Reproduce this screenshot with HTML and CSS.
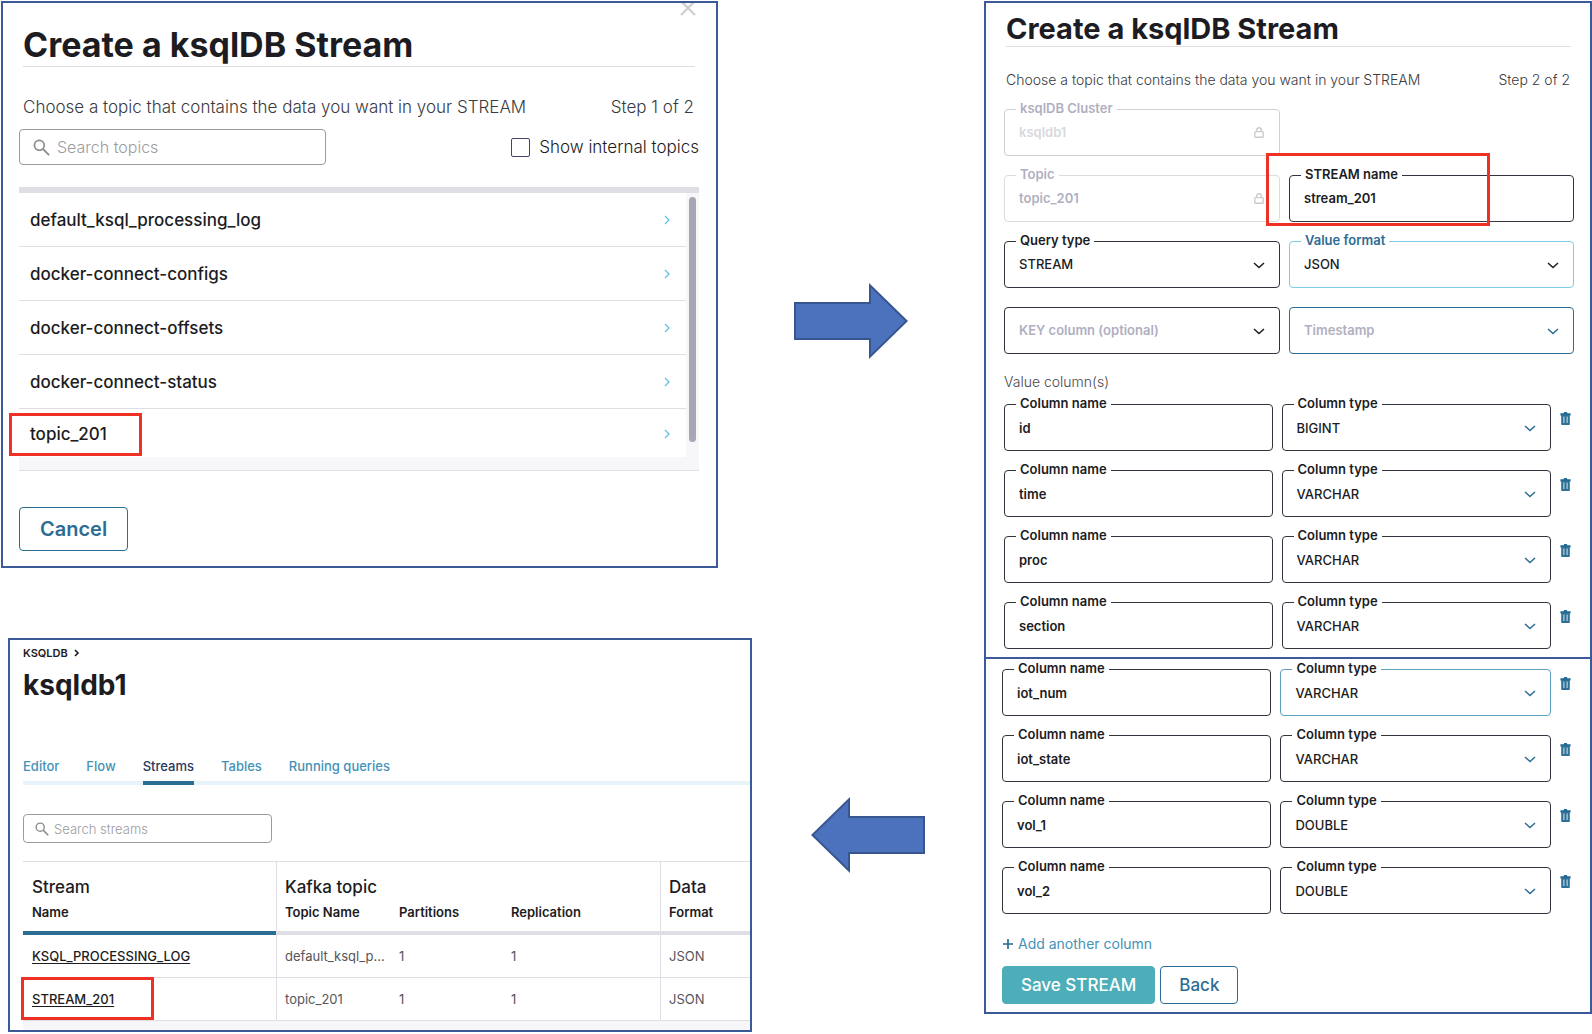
FILE: index.html
```html
<!DOCTYPE html>
<html lang="en">
	<head>
		<meta charset="UTF-8" />
		<meta name="viewport" content="width=device-width, initial-scale=1.0" />
		<title>Create a ksqlDB Stream</title>
		<link rel="stylesheet" href="styles.css">
	</head>
	<body>
		<!-- shared icons -->
		<svg class="sprite" xmlns="http://www.w3.org/2000/svg">
			<symbol id="icon-search" viewBox="0 0 18 18">
				<circle cx="6.7" cy="6.7" r="5.2" fill="none" stroke="currentColor" stroke-width="1.8" />
				<path d="M10.5 10.5L17 17" fill="none" stroke="currentColor" stroke-width="2" />
			</symbol>
			<symbol id="icon-right" viewBox="0 0 6 10">
				<path d="M1 1l4 4-4 4" fill="none" stroke="currentColor" stroke-width="1.2" />
			</symbol>
			<symbol id="icon-down" viewBox="0 0 12 7">
				<path d="M1 1l5 4.6L11 1" fill="none" stroke="currentColor" stroke-width="1.5" />
			</symbol>
			<symbol id="icon-lock" viewBox="0 0 10 11">
				<rect x="0.8" y="4.6" width="8.4" height="5.6" rx="0.8" fill="none" stroke="currentColor" stroke-width="1.4" />
				<path d="M2.6 4.6V3.2a2.4 2.4 0 0 1 4.8 0v1.4" fill="none" stroke="currentColor" stroke-width="1.4" />
			</symbol>
			<symbol id="icon-trash" viewBox="0 0 11 13">
				<path d="M0.4 1.2h3.2L4.2 0h2.6l0.6 1.2h3.2v2.2H0.4z" fill="#236b93" />
				<path d="M1.2 3h8.6v9.2a0.8 0.8 0 0 1-0.8 0.8H2a0.8 0.8 0 0 1-0.8-0.8z" fill="#2f7096" />
				<path d="M3.2 4.600h1.300v6.400H3.200zM6.500 4.600H7.800v6.400H6.500z" fill="#a9cbdc" />
			</symbol>
		</svg>

		<main class="page">
			<div class="left">
				<div class="step">
					<section class="panel pick-topic">
						<button class="close" type="button" aria-label="Close">
							<svg viewBox="0 0 16 16"><path d="M1 1l14 14M15 1L1 15" fill="none" stroke="currentColor" stroke-width="2.4" /></svg>
						</button>
						<h1 class="title">Create a ksqlDB Stream</h1>
						<div class="intro">
							<span>Choose a topic that contains the data you want in your STREAM</span>
							<span>Step 1 of 2</span>
						</div>
						<div class="filter">
							<label class="search">
								<svg><use href="#icon-search" /></svg>
								<input type="text" placeholder="Search topics" aria-label="Search topics" />
							</label>
							<label class="internal">
								<input type="checkbox" />
								<span>Show internal topics</span>
							</label>
						</div>
						<div class="topics">
							<ul class="topic-list">
								<li><a href="#">default_ksql_processing_log <svg><use href="#icon-right" /></svg></a></li>
								<li><a href="#">docker-connect-configs <svg><use href="#icon-right" /></svg></a></li>
								<li><a href="#">docker-connect-offsets <svg><use href="#icon-right" /></svg></a></li>
								<li><a href="#">docker-connect-status <svg><use href="#icon-right" /></svg></a></li>
								<li class="marked"><a href="#">topic_201 <svg><use href="#icon-right" /></svg></a></li>
							</ul>
							<div class="scrollbar"><div class="thumb"></div></div>
						</div>
						<button class="btn btn-large" type="button">Cancel</button>
					</section>
					<div class="arrow arrow-next">
						<svg viewBox="0 0 114 76"><path d="M1 20h75V2.400L112.600 38 76 73.600V56H1z" /></svg>
					</div>
				</div>

				<div class="step step-result">
					<section class="panel streams">
						<a class="crumb" href="#">KSQLDB <svg viewBox="0 0 6 8"><path d="M1 1l3 3-3 3" fill="none" stroke="currentColor" stroke-width="1.6" /></svg></a>
						<h2 class="cluster-name">ksqldb1</h2>
						<nav class="tabs">
							<a href="#">Editor</a>
							<a href="#">Flow</a>
							<a href="#" class="active">Streams</a>
							<a href="#">Tables</a>
							<a href="#">Running queries</a>
						</nav>
						<label class="search search-small">
							<svg><use href="#icon-search" /></svg>
							<input type="text" placeholder="Search streams" aria-label="Search streams" />
						</label>
						<table class="stream-table">
							<colgroup>
								<col class="col-name" />
								<col class="col-topic" />
								<col class="col-partitions" />
								<col class="col-replication" />
								<col />
							</colgroup>
							<thead>
								<tr class="groups">
									<th>Stream</th>
									<th colspan="3" class="group-start">Kafka topic</th>
									<th class="group-start">Data</th>
								</tr>
								<tr class="heads">
									<th class="sorted">Name</th>
									<th class="group-start">Topic Name</th>
									<th>Partitions</th>
									<th>Replication</th>
									<th class="group-start">Format</th>
								</tr>
							</thead>
							<tbody>
								<tr>
									<td><a href="#">KSQL_PROCESSING_LOG</a></td>
									<td class="group-start">default_ksql_p...</td>
									<td>1</td>
									<td>1</td>
									<td class="group-start">JSON</td>
								</tr>
								<tr>
									<td class="marked"><a href="#">STREAM_201</a></td>
									<td class="group-start">topic_201</td>
									<td>1</td>
									<td>1</td>
									<td class="group-start">JSON</td>
								</tr>
							</tbody>
						</table>
						<div class="table-end"></div>
					</section>
					<div class="arrow">
						<svg viewBox="0 0 114 76"><path d="M113 20H38V2.400L1.400 38 38 73.600V56h75z" /></svg>
					</div>
				</div>
			</div>

			<form class="right">
				<section class="panel stream-form">
					<h2 class="title">Create a ksqlDB Stream</h2>
					<div class="intro">
						<span>Choose a topic that contains the data you want in your STREAM</span>
						<span>Step 2 of 2</span>
					</div>
					<div class="settings">
						<div class="field locked faint">
							<label for="cluster">ksqlDB Cluster</label>
							<input id="cluster" type="text" value="ksqldb1" disabled />
							<svg><use href="#icon-lock" /></svg>
						</div>
						<div class="field locked first-col">
							<label for="topic">Topic</label>
							<input id="topic" type="text" value="topic_201" disabled />
							<svg><use href="#icon-lock" /></svg>
						</div>
						<div class="field marked">
							<label for="stream-name">STREAM name</label>
							<input id="stream-name" type="text" value="stream_201" />
						</div>
						<div class="field">
							<label for="query-type">Query type</label>
							<select id="query-type"><option>STREAM</option></select>
							<svg><use href="#icon-down" /></svg>
						</div>
						<div class="field focused">
							<label for="value-format">Value format</label>
							<select id="value-format"><option>JSON</option></select>
							<svg><use href="#icon-down" /></svg>
						</div>
						<div class="field empty">
							<select aria-label="KEY column"><option>KEY column (optional)</option></select>
							<svg><use href="#icon-down" /></svg>
						</div>
						<div class="field empty blue">
							<select aria-label="Timestamp"><option>Timestamp</option></select>
							<svg><use href="#icon-down" /></svg>
						</div>
					</div>
					<p class="columns-title">Value column(s)</p>
					<div class="columns">
						<div class="column">
							<div class="field">
								<label for="name-1">Column name</label>
								<input id="name-1" type="text" value="id" />
							</div>
							<div class="field">
								<label for="type-1">Column type</label>
								<select id="type-1"><option>BIGINT</option></select>
								<svg><use href="#icon-down" /></svg>
							</div>
							<button class="trash" type="button" aria-label="Delete column"><svg><use href="#icon-trash" /></svg></button>
						</div>
						<div class="column">
							<div class="field">
								<label for="name-2">Column name</label>
								<input id="name-2" type="text" value="time" />
							</div>
							<div class="field">
								<label for="type-2">Column type</label>
								<select id="type-2"><option>VARCHAR</option></select>
								<svg><use href="#icon-down" /></svg>
							</div>
							<button class="trash" type="button" aria-label="Delete column"><svg><use href="#icon-trash" /></svg></button>
						</div>
						<div class="column">
							<div class="field">
								<label for="name-3">Column name</label>
								<input id="name-3" type="text" value="proc" />
							</div>
							<div class="field">
								<label for="type-3">Column type</label>
								<select id="type-3"><option>VARCHAR</option></select>
								<svg><use href="#icon-down" /></svg>
							</div>
							<button class="trash" type="button" aria-label="Delete column"><svg><use href="#icon-trash" /></svg></button>
						</div>
						<div class="column">
							<div class="field">
								<label for="name-4">Column name</label>
								<input id="name-4" type="text" value="section" />
							</div>
							<div class="field">
								<label for="type-4">Column type</label>
								<select id="type-4"><option>VARCHAR</option></select>
								<svg><use href="#icon-down" /></svg>
							</div>
							<button class="trash" type="button" aria-label="Delete column"><svg><use href="#icon-trash" /></svg></button>
						</div>
					</div>
				</section>

				<section class="panel stream-form-end">
					<div class="columns">
						<div class="column">
							<div class="field">
								<label for="name-5">Column name</label>
								<input id="name-5" type="text" value="iot_num" />
							</div>
							<div class="field hovered">
								<label for="type-5">Column type</label>
								<select id="type-5"><option>VARCHAR</option></select>
								<svg><use href="#icon-down" /></svg>
							</div>
							<button class="trash" type="button" aria-label="Delete column"><svg><use href="#icon-trash" /></svg></button>
						</div>
						<div class="column">
							<div class="field">
								<label for="name-6">Column name</label>
								<input id="name-6" type="text" value="iot_state" />
							</div>
							<div class="field">
								<label for="type-6">Column type</label>
								<select id="type-6"><option>VARCHAR</option></select>
								<svg><use href="#icon-down" /></svg>
							</div>
							<button class="trash" type="button" aria-label="Delete column"><svg><use href="#icon-trash" /></svg></button>
						</div>
						<div class="column">
							<div class="field">
								<label for="name-7">Column name</label>
								<input id="name-7" type="text" value="vol_1" />
							</div>
							<div class="field">
								<label for="type-7">Column type</label>
								<select id="type-7"><option>DOUBLE</option></select>
								<svg><use href="#icon-down" /></svg>
							</div>
							<button class="trash" type="button" aria-label="Delete column"><svg><use href="#icon-trash" /></svg></button>
						</div>
						<div class="column">
							<div class="field">
								<label for="name-8">Column name</label>
								<input id="name-8" type="text" value="vol_2" />
							</div>
							<div class="field">
								<label for="type-8">Column type</label>
								<select id="type-8"><option>DOUBLE</option></select>
								<svg><use href="#icon-down" /></svg>
							</div>
							<button class="trash" type="button" aria-label="Delete column"><svg><use href="#icon-trash" /></svg></button>
						</div>
					</div>
					<button class="add-column" type="button">
						<svg viewBox="0 0 12 12"><path d="M6 1v10M1 6h10" fill="none" stroke="#23668c" stroke-width="1.600" /></svg>
						Add another column
					</button>
					<div class="actions">
						<button class="btn btn-primary" type="submit">Save STREAM</button>
						<button class="btn" type="button">Back</button>
					</div>
				</section>
			</form>
		</main>
	</body>
</html>
```

FILE: styles.css
```css
:root {
	--frame: #3a5a99;
	--mark: #ee3124;
	--ink: #1c1c22;
	--muted: #b0afc2;
	--blue: #2c6d94;
	--link: #4592b8;
	--line: #dedee4;
	--shade: #f7f7fa;
}
*,
*::after {
	box-sizing: border-box;
}
body {
	margin: 0;
	background-color: #fff;
	color: var(--ink);
	font-family: Inter, sans-serif;
	font-size: 14px;
	line-height: 20px;
}
h1,
h2,
p,
ul {
	margin: 0;
	padding: 0;
}
a {
	color: inherit;
	text-decoration: none;
}
input,
select,
button {
	font-family: inherit;
	color: inherit;
}
button {
	cursor: pointer;
}
.sprite {
	display: none;
}
.page {
	display: grid;
	grid-template-columns: 983fr 608fr;
	align-items: start;
	padding: 1px 0 0 1px;
}
.left {
	display: flex;
	flex-direction: column;
	gap: 70px;
}
.step {
	display: grid;
	grid-template-columns: 717fr 266fr;
}
.step-result {
	grid-template-columns: 744fr 232fr;
	padding-left: 7px;
}
.panel {
	position: relative;
	border: 2px solid var(--frame);
	overflow: hidden;
}
.arrow {
	display: flex;
	align-items: center;
	justify-content: center;
}
.arrow-next {
	padding-top: 72px;
}
.arrow svg {
	width: 114px;
	height: 76px;
	fill: #4c71bd;
	stroke: #37558f;
	stroke-width: 2;
}

/* red frame around the value to pick */
.marked {
	position: relative;
	z-index: 1;
}
.marked::after {
	content: '';
	position: absolute;
	border: 3px solid var(--mark);
	pointer-events: none;
}

/* step 1 */
.pick-topic {
	padding: 22px 17px 15px 16px;
}
.close {
	position: absolute;
	top: -3px;
	right: 20px;
	width: 16px;
	height: 16px;
	padding: 0;
	border: none;
	background: none;
	color: #cfcfcf;
}
.close svg {
	display: block;
	width: 16px;
	height: 16px;
}
.title {
	border-bottom: 1px solid var(--line);
	font-weight: 700;
	white-space: nowrap;
}
.pick-topic .title {
	margin: 0 4px;
	padding-bottom: 1px;
	font-size: 34px;
	line-height: 40px;
}
.intro {
	display: flex;
	justify-content: space-between;
	color: #3a3a3e;
	font-weight: 300;
	white-space: nowrap;
}
.pick-topic .intro {
	margin: 30px 5px 12px 4px;
	font-size: 17px;
}
.filter {
	display: flex;
	align-items: center;
	justify-content: space-between;
}
.search {
	display: flex;
	align-items: center;
	gap: 7px;
	width: 307px;
	height: 36px;
	padding: 0 13px;
	border: 1px solid #9c9c9e;
	border-radius: 4px;
}
.search svg {
	flex-shrink: 0;
	width: 17px;
	height: 17px;
	color: #8c8c8e;
}
.search input {
	width: 100%;
	padding: 0;
	border: none;
	outline: none;
	background: none;
	font-size: 16px;
	font-weight: 300;
}
.search input::placeholder {
	color: #9c9c9e;
}
.internal {
	display: flex;
	align-items: center;
	gap: 9px;
	font-size: 17px;
	font-weight: 300;
}
.internal input {
	appearance: none;
	width: 19px;
	height: 19px;
	margin: 0;
	border: 1px solid #45436a;
	border-radius: 2px;
}
.topics {
	display: flex;
	margin: 22px 0 36px;
	border-top: 6px solid #dfdee5;
	border-bottom: 1px solid var(--line);
	background-color: var(--shade);
}
.topic-list {
	flex-grow: 1;
	margin-bottom: 13px;
	background-color: #fff;
	list-style: none;
}
.topic-list a {
	display: flex;
	align-items: center;
	justify-content: space-between;
	padding: 17px 16px 16px 11px;
	border-bottom: 1px solid var(--line);
	font-size: 17px;
	font-weight: 500;
}
.topic-list li:last-child a {
	padding: 15px 16px 13px 11px;
	border-bottom: none;
}
.topic-list svg {
	width: 6px;
	height: 10px;
	color: #5cbfe6;
}
.topic-list .marked::after {
	top: 4px;
	left: -10px;
	width: 133px;
	height: 43px;
}
.scrollbar {
	display: flex;
	width: 13px;
	padding: 4px 3px 28px;
}
.thumb {
	flex-grow: 1;
	border-radius: 4px;
	background-color: #a6a6b5;
}
.btn {
	height: 38px;
	padding: 0 18px;
	border: 1px solid var(--blue);
	border-radius: 4px;
	background-color: #fff;
	color: var(--blue);
	font-size: 17px;
	font-weight: 500;
}
.btn-large {
	height: 44px;
	padding: 0 20px;
	font-size: 20px;
	font-weight: 600;
}
.btn-primary {
	border-color: #4dadb9;
	background-color: #4dadb9;
	color: #fff;
}

/* stream list */
.streams {
	padding: 5px 0 0 13px;
}
.crumb {
	display: flex;
	align-items: center;
	gap: 6px;
	font-size: 11px;
	font-weight: 600;
	line-height: 16px;
}
.crumb svg {
	width: 6px;
	height: 8px;
}
.cluster-name {
	margin-top: 8px;
	font-size: 28px;
	line-height: 32px;
}
.tabs {
	display: flex;
	gap: 27px;
	margin-top: 55px;
	background: linear-gradient(#e6f3f9, #e6f3f9) bottom / 100% 4px no-repeat;
	color: var(--link);
	font-size: 13px;
	font-weight: 500;
}
.tabs a {
	padding-bottom: 5px;
	border-bottom: 4px solid transparent;
}
.tabs .active {
	border-color: var(--blue);
	color: #28385e;
}
.search-small {
	gap: 5px;
	width: 249px;
	height: 29px;
	margin: 29px 0 18px;
	padding: 0 11px;
}
.search-small svg {
	width: 14px;
	height: 14px;
}
.search-small input {
	font-size: 13px;
}
.stream-table {
	width: 100%;
	border-top: 1px solid var(--line);
	border-spacing: 0;
	table-layout: fixed;
	text-align: left;
	white-space: nowrap;
}
.col-name {
	width: 253px;
}
.col-topic {
	width: 114px;
}
.col-partitions {
	width: 112px;
}
.col-replication {
	width: 158px;
}
.stream-table th,
.stream-table td {
	padding: 0 0 0 9px;
}
.stream-table .group-start {
	padding-left: 8px;
	border-left: 1px solid var(--line);
}
.stream-table .groups th {
	padding-top: 15px;
	padding-bottom: 5px;
	font-size: 17px;
	font-weight: 500;
}
.stream-table .heads th {
	padding-bottom: 9px;
	border-bottom: 4px solid #dfdee5;
	font-size: 13px;
	font-weight: 600;
}
.stream-table .heads .sorted {
	border-bottom-color: var(--blue);
}
.stream-table td {
	padding-top: 11px;
	padding-bottom: 11px;
	border-bottom: 1px solid var(--line);
	color: #55555a;
	font-size: 13px;
}
.stream-table td a {
	color: var(--ink);
	font-weight: 500;
	text-decoration: underline;
	text-underline-offset: 2px;
}
.stream-table .marked::after {
	top: -1px;
	left: -2px;
	width: 133px;
	height: 43px;
}
.table-end {
	height: 9px;
	background-color: var(--shade);
}

/* step 2 */
.stream-form {
	padding: 9px 16px 8px 18px;
}
.stream-form-end {
	padding: 10px 16px 8px;
	border-top: none;
}
.stream-form .title {
	margin: 0 3px 0 2px;
	font-size: 29px;
	line-height: 34px;
}
.stream-form .intro {
	margin: 23px 4px 19px 2px;
}
.settings {
	display: grid;
	grid-template-columns: 276fr 285fr;
	gap: 19px 9px;
}
.first-col {
	grid-column: 1;
}
.field {
	position: relative;
	display: grid;
}
.field label {
	position: absolute;
	top: -11px;
	left: 12px;
	padding: 0 4px;
	background-color: #fff;
	font-size: 13px;
	font-weight: 600;
}
.field input,
.field select {
	appearance: none;
	width: 100%;
	height: 47px;
	padding: 0 14px;
	border: 1px solid #33333d;
	border-radius: 4px;
	outline: none;
	background-color: #fff;
	font-size: 13px;
	font-weight: 600;
	opacity: 1;
}
.field select {
	padding-right: 36px;
	font-weight: 500;
}
.settings input,
.settings select {
	padding-bottom: 2px;
}
.field svg {
	position: absolute;
	top: 21px;
	right: 15px;
	width: 12px;
	height: 7px;
	pointer-events: none;
}
.field.locked svg {
	top: 18px;
	right: 16px;
	width: 10px;
	height: 11px;
	color: #cbcbd0;
}
.field.locked label,
.field.locked input {
	border-color: #dcdce0;
	color: var(--muted);
}
.field.faint input {
	border-color: #cfcfd2;
	color: #d8d8dc;
}
.field.focused label {
	color: var(--blue);
}
.field.focused select {
	border-color: #7fcbe6;
}
.field.hovered select {
	border-color: #5f9fc0;
}
.field.empty select {
	color: var(--muted);
	font-weight: 600;
}
.field.blue select {
	border-color: var(--blue);
}
.field.blue svg,
.column .field svg {
	color: var(--blue);
}
.settings .marked::after {
	top: -22px;
	left: -23px;
	width: 224px;
	height: 73px;
}
.columns-title {
	margin: 18px 0 12px;
	color: #48484c;
	font-weight: 300;
}
.columns {
	display: grid;
	gap: 19px;
}
.column {
	display: grid;
	grid-template-columns: 269fr 270fr 14px;
	gap: 9px;
}
.trash {
	align-self: start;
	justify-self: start;
	margin-top: 8px;
	padding: 0;
	border: none;
	background: none;
}
.trash svg {
	display: block;
	width: 11px;
	height: 13px;
}
.add-column {
	display: flex;
	align-items: center;
	gap: 4px;
	margin: 20px 0 12px;
	padding: 0;
	border: none;
	background: none;
	color: var(--link);
	font-size: 14px;
	line-height: 20px;
}
.add-column svg {
	width: 12px;
	height: 12px;
}
.actions {
	display: flex;
	gap: 5px;
}
```
